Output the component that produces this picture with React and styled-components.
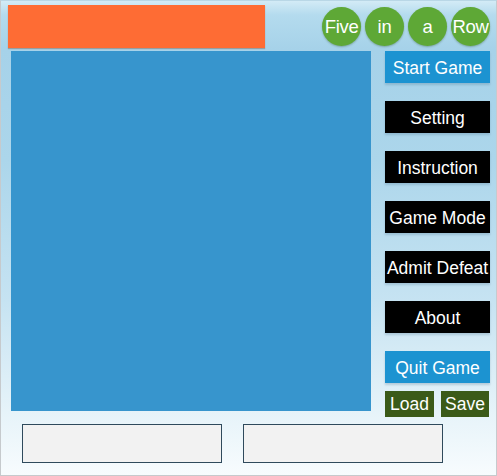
import React from 'react'
import styled, {createGlobalStyle} from 'styled-components'

const Global = createGlobalStyle`
  html, body {
    margin: 0;
    padding: 0;
    background: #ffffff;
  }
  * {
    box-sizing: border-box;
  }
`

const menu = [
  {label: 'Start Game', tone: 'blue'},
  {label: 'Setting', tone: 'black'},
  {label: 'Instruction', tone: 'black'},
  {label: 'Game Mode', tone: 'black'},
  {label: 'Admit Defeat', tone: 'black'},
  {label: 'About', tone: 'black'},
  {label: 'Quit Game', tone: 'blue'},
]

const title = ['Five', 'in', 'a', 'Row']

export default function App() {
  return (
    <>
      <Global/>
      <Page>
        <Header>
          <Banner/>
          <Title>
            {title.map(word => <Bubble key={word}>{word}</Bubble>)}
          </Title>
        </Header>

        <Main>
          <Board/>
          <Sidebar>
            {menu.map(item => (
              <MenuButton key={item.label} $tone={item.tone}>{item.label}</MenuButton>
            ))}
            <FileRow>
              <SmallButton $w={49}>Load</SmallButton>
              <SmallButton $w={48}>Save</SmallButton>
            </FileRow>
          </Sidebar>
        </Main>

        <Footer>
          <InfoBox/>
          <InfoBox/>
        </Footer>
      </Page>
    </>
  )
}

const Page = styled.div`
  width: 497px;
  height: 476px;
  border: 1px solid #c6cacd;
  border-top-color: #b9d7e6;
  background: linear-gradient(to bottom,
    #d3ebf6 0px,
    #b4dbee 14px,
    #a6d2e9 48px,
    #acd6eb 160px,
    #c6e3f2 300px,
    #e6f3f9 410px,
    #f8fcfe 476px);
  font-family: "Liberation Sans", Arial, sans-serif;
  overflow: hidden;
`

const Header = styled.div`
  height: 50px;
  display: flex;
  justify-content: space-between;
  align-items: flex-start;
  padding: 4px 6px 0 7px;
`

const Banner = styled.div`
  width: 257px;
  height: 43px;
  background: #fe6c34;
  box-shadow: 0 1px 1px rgba(120, 60, 30, 0.35);
`

const Title = styled.div`
  display: flex;
  gap: 4px;
  margin-top: 2px;
`

const Bubble = styled.div`
  width: 39px;
  height: 39px;
  border-radius: 50%;
  background: #5ea836;
  box-shadow: 0 1px 2px rgba(40, 80, 30, 0.35);
  color: #ffffff;
  font-size: 18.5px;
  display: flex;
  align-items: center;
  justify-content: center;
  white-space: nowrap;
  letter-spacing: -0.3px;
`

const Main = styled.div`
  display: flex;
  align-items: flex-start;
  gap: 14px;
  padding-left: 10px;
`

const Board = styled.div`
  width: 360px;
  height: 360px;
  background: #3795cd;
`

const Sidebar = styled.div`
  width: 105px;
  display: flex;
  flex-direction: column;
  gap: 18px;
`

const MenuButton = styled.div`
  height: 32px;
  padding-top: 2px;
  background: ${p => p.$tone === 'blue' ? '#1c93d1' : '#000000'};
  box-shadow: 0 2px 2px rgba(60, 100, 130, 0.25);
  color: #ffffff;
  font-size: 17.5px;
  display: flex;
  align-items: center;
  justify-content: center;
  white-space: nowrap;
`

const FileRow = styled.div`
  display: flex;
  gap: 7px;
  margin-top: -10px;
`

const SmallButton = styled.div`
  width: ${p => p.$w}px;
  height: 26px;
  padding-top: 1px;
  background: #3b5a18;
  color: #ffffff;
  font-size: 17.5px;
  display: flex;
  align-items: center;
  justify-content: center;
`

const Footer = styled.div`
  display: flex;
  gap: 21px;
  padding: 7px 0 0 21px;
`

const InfoBox = styled.div`
  width: 200px;
  height: 39px;
  background: #f2f2f2;
  border: 1px solid #2f4a5c;
`
